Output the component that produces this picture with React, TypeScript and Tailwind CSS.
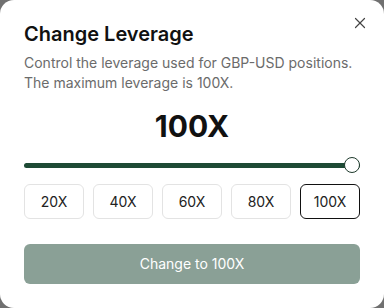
import { X } from 'lucide-react';

const options = [20, 40, 60, 80, 100];

export default function App() {
  const value = 100;

  return (
    <div className="h-[308px] w-[384px] bg-[#707070]" style={{ fontFamily: 'Inter, "Noto Sans", sans-serif' }}>
      <div className="relative flex h-full flex-col rounded-[14px] bg-white px-6 pt-5">
        <button className="absolute right-[15px] top-[14px] flex h-[18px] w-[18px] items-center justify-center text-[#444]">
          <X className="h-[18px] w-[18px]" strokeWidth={1.6} aria-hidden />
        </button>

        <h2 className="text-xl font-semibold leading-7 text-[#111]">Change Leverage</h2>
        <p className="mt-[5px] text-sm leading-5 text-[#6b6b6b]">
          Control the leverage used for GBP-USD positions.
          <br />
          The maximum leverage is 100X.
        </p>

        <div className="mt-[15px] text-center text-[30px] font-bold leading-9 text-[#111]">{value}X</div>

        <div className="relative mt-[13px] flex h-4 items-center">
          <div className="h-[5px] w-full rounded-full bg-[#1e4a35]" />
          <div className="absolute right-0 top-0 h-4 w-4 rounded-full border border-[#1e3a2c] bg-white" />
        </div>

        <div className="mt-[11px] grid grid-cols-5 gap-[9px]">
          {options.map((o) => (
            <button
              key={o}
              className={
                o === value
                  ? 'h-[35px] rounded-md border border-[#111] text-sm text-[#222]'
                  : 'h-[35px] rounded-md border border-[#e3e3e3] text-sm text-[#222]'
              }
            >
              {o}X
            </button>
          ))}
        </div>

        <button className="mt-[25px] h-10 w-full rounded-md bg-[#8aa096] text-sm text-white">
          Change to {value}X
        </button>
      </div>
    </div>
  );
}
